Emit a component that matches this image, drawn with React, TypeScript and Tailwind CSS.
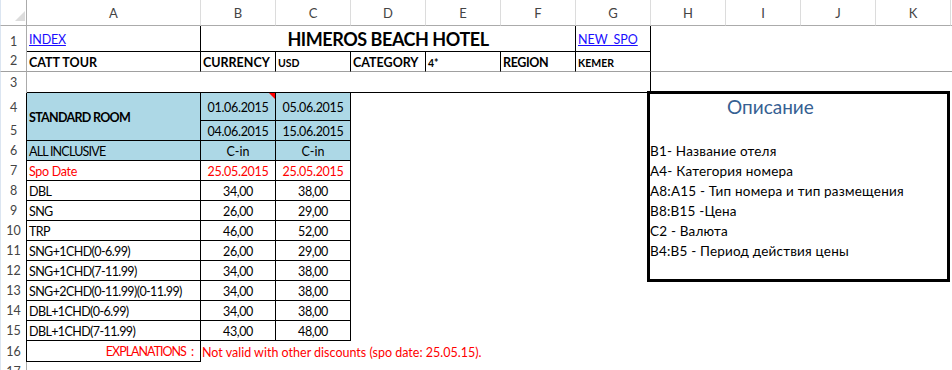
import React from "react";

const RH = ({ n, cls }: { n: number; cls: string }) => (
  <div className={"flex items-end justify-center text-[#444444] " + cls}>{n}</div>
);

export default function App() {
  return (
    <div className="relative w-[952px] h-[370px] overflow-hidden bg-white text-[12.5px] text-black font-['Lato','Noto_Sans',sans-serif]">
      <div className="grid grid-cols-[27px_174px_75px_75px_75px_75px_75px_75px_75px_75px_75px_75px_1px] grid-rows-[26px_26px_20px_21px_28px_20px_20px_20px_20px_20px_20px_20px_20px_20px_20px_20px_21px_20px] leading-[18px]">
        {/* header row */}
        <div className="relative border-r border-b border-[#ababab] border-l border-l-[#dbe5f1]">
          <svg className="absolute left-[14px] top-[11px]" width="10" height="10" viewBox="0 0 10 10">
            <polygon points="10,0 10,10 0,10" fill="#dcdcdc" />
          </svg>
        </div>
        {["A", "B", "C", "D", "E", "F", "G", "H", "I", "J", "K"].map((c) => (
          <div key={c} className="flex items-end justify-center pb-[3px] text-[13px] text-[#444444] border-r border-r-[#dcdcdc] border-b border-b-[#ababab]">
            {c}
          </div>
        ))}
        <div className="border-b border-[#ababab]" />

        {/* row 1 */}
        <RH n={1} cls="pb-[1px] border-r border-[#ababab] border-l border-l-[#dbe5f1]" />
        <div className="flex items-center pl-[2px] pt-[2px] tracking-[-0.2px] border-r border-b border-black">
          <span className="text-[#1a0dff] underline">INDEX</span>
        </div>
        <div className="col-span-5 flex items-center justify-center pt-[1px] font-bold text-[18px] tracking-[-0.45px] border-r border-b border-black">
          HIMEROS BEACH HOTEL
        </div>
        <div className="flex items-center pl-[2px] pt-[2px] border-r border-b border-black">
          <span className="text-[#1a0dff] underline">NEW_SPO</span>
        </div>
        <div className="col-span-5" />

        {/* row 2 */}
        <RH n={2} cls="pb-[1px] border-r border-r-[#ababab] border-b border-b-[#a0a0a0] border-l border-l-[#dbe5f1]" />
        <div className="flex items-center pl-[2px] pt-[3px] font-bold border-r border-r-black border-b border-b-[#a0a0a0]">CATT TOUR</div>
        <div className="flex items-center pl-[2px] pt-[3px] font-bold border-r border-r-black border-b border-b-[#a0a0a0]">CURRENCY</div>
        <div className="flex items-center pl-[2px] pt-[2px] font-bold text-[10.5px] border-r border-r-black border-b border-b-[#a0a0a0]">USD</div>
        <div className="flex items-center pl-[2px] pt-[3px] font-bold border-r border-r-black border-b border-b-[#a0a0a0]">CATEGORY</div>
        <div className="flex items-center pl-[2px] pt-[2px] font-bold text-[10.5px] border-r border-r-black border-b border-b-[#a0a0a0]">4*</div>
        <div className="flex items-center pl-[2px] pt-[3px] font-bold tracking-[-0.4px] border-r border-r-black border-b border-b-[#a0a0a0]">REGION</div>
        <div className="flex items-center pl-[2px] pt-[2px] font-bold text-[10.5px] border-r border-r-black border-b border-b-[#a0a0a0]">KEMER</div>
        <div className="col-span-5 border-b border-b-[#a0a0a0]" />

        {/* row 3 */}
        <RH n={3} cls="pb-[1px] border-r border-[#ababab] border-l border-l-[#dbe5f1]" />
        <div className="col-span-6 border-b border-black" />
        <div className="border-r border-b border-black" />
        <div className="col-span-5" />

        {/* row 4 */}
        <RH n={4} cls="pb-[4px] border-r border-black border-l border-l-[#dbe5f1]" />
        <div className="row-span-2 flex items-center pl-[2px] pt-[3px] font-bold tracking-[-0.7px] bg-[#add8e6] border-r border-b border-black whitespace-nowrap">STANDARD ROOM</div>
        <div className="relative flex items-center justify-center pt-[2px] tracking-[-0.3px] bg-[#add8e6] border-r border-b border-black">
          01.06.2015
          <svg className="absolute right-0 top-0" width="6" height="6" viewBox="0 0 6 6">
            <polygon points="0,0 6,0 6,6" fill="#ff0000" />
          </svg>
        </div>
        <div className="flex items-center justify-center pt-[2px] tracking-[-0.3px] bg-[#add8e6] border-r border-b border-black">05.06.2015</div>
        <div className="col-span-9" />

        {/* row 5 */}
        <RH n={5} cls="pb-[1px] border-r border-black border-l border-l-[#dbe5f1]" />
        <div className="flex items-center justify-center pt-[3px] tracking-[-0.3px] bg-[#add8e6] border-r border-b border-black">04.06.2015</div>
        <div className="flex items-center justify-center pt-[3px] tracking-[-0.3px] bg-[#add8e6] border-r border-b border-black">15.06.2015</div>
        <div className="col-span-9" />

        {/* row 6 */}
        <RH n={6} cls="pb-[1px] border-r border-black border-l border-l-[#dbe5f1]" />
        <div className="flex items-center pl-[2px] pt-[2px] tracking-[-0.8px] bg-[#add8e6] border-r border-b border-black">ALL INCLUSIVE</div>
        <div className="flex items-center justify-center pt-[2px] bg-[#add8e6] border-r border-b border-black">C-in</div>
        <div className="flex items-center justify-center pt-[2px] bg-[#add8e6] border-r border-b border-black">C-in</div>
        <div className="col-span-9" />

        {/* row 7 */}
        <RH n={7} cls="pb-[1px] border-r border-black border-l border-l-[#dbe5f1]" />
        <div className="flex items-center pl-[2px] pt-[2px] tracking-[-0.3px] text-[#ff0000] border-r border-b border-black">Spo Date</div>
        <div className="flex items-center justify-center pt-[2px] tracking-[-0.3px] text-[#ff0000] border-r border-b border-black">25.05.2015</div>
        <div className="flex items-center justify-center pt-[2px] tracking-[-0.3px] text-[#ff0000] border-r border-b border-black">25.05.2015</div>
        <div className="col-span-9" />

        {/* data rows */}
        {[
          [8, "DBL", "34,00", "38,00"],
          [9, "SNG", "26,00", "29,00"],
          [10, "TRP", "46,00", "52,00"],
          [11, "SNG+1CHD(0-6.99)", "26,00", "29,00"],
          [12, "SNG+1CHD(7-11.99)", "34,00", "38,00"],
          [13, "SNG+2CHD(0-11.99)(0-11.99)", "34,00", "38,00"],
          [14, "DBL+1CHD(0-6.99)", "34,00", "38,00"],
          [15, "DBL+1CHD(7-11.99)", "43,00", "48,00"],
        ].map(([n, a, b, c]) => (
          <React.Fragment key={n as number}>
            <RH n={n as number} cls="pb-[1px] border-r border-black border-l border-l-[#dbe5f1]" />
            <div className="flex items-center pl-[2px] pt-[2px] tracking-[-0.6px] whitespace-nowrap overflow-hidden border-r border-b border-black">{a}</div>
            <div className="flex items-center justify-center pt-[2px] tracking-[-0.4px] border-r border-b border-black">{b}</div>
            <div className="flex items-center justify-center pt-[2px] tracking-[-0.4px] border-r border-b border-black">{c}</div>
            <div className="col-span-9" />
          </React.Fragment>
        ))}

        {/* row 16 */}
        <RH n={16} cls="pb-[1px] border-r border-black border-l border-l-[#dbe5f1]" />
        <div className="flex items-center justify-end pr-[6px] pt-[2px] text-[#ff0000] border-r border-b border-black whitespace-nowrap">
          <span className="tracking-[-1px]">EXPLANATIONS</span>
          <span className="ml-[5px]">:</span>
        </div>
        <div className="col-span-11 flex items-center pl-[1px] pt-[2px] text-[#ff0000] whitespace-nowrap">
          Not valid with other discounts (spo date: 25.05.15).
        </div>

        {/* row 17 */}
        <RH n={17} cls="pb-[1px] border-r border-[#ababab] border-l border-l-[#dbe5f1]" />
        <div className="col-span-12" />
      </div>

      {/* description text box */}
      <div className="absolute left-[647px] top-[91px] w-[303px] h-[191px] border-[3px] border-black bg-white">
        <div className="pl-[77px] pt-[1px] text-[19px] leading-[24px] text-[#366092]">Описание</div>
        <div className="mt-[22px] flex flex-col text-[13.5px] tracking-[0.2px] leading-[20px] whitespace-nowrap">
          <div>B1- Название отеля</div>
          <div>A4- Категория номера</div>
          <div>A8:A15 - Тип номера и тип размещения</div>
          <div>B8:B15 -Цена</div>
          <div>C2 - Валюта</div>
          <div>B4:B5 - Период действия цены</div>
        </div>
      </div>
    </div>
  );
}
